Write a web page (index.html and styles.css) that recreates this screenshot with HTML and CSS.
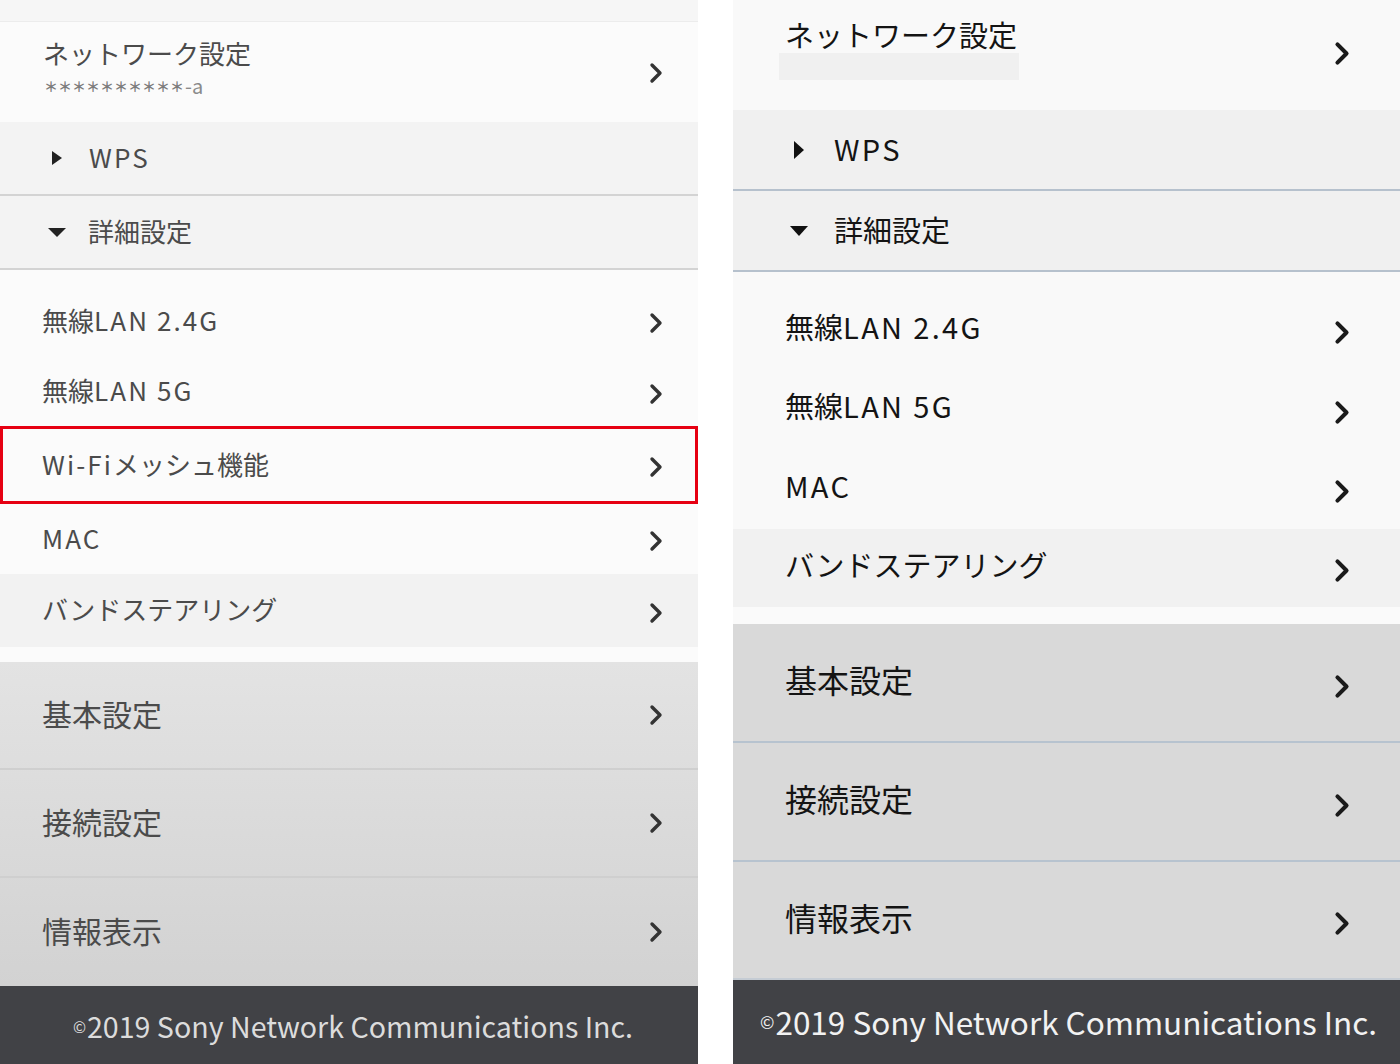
FILE: index.html
```html
<!DOCTYPE html>
<html lang="ja">
<head>
<meta charset="utf-8">
<title>設定メニュー</title>
<link rel="stylesheet" href="styles.css">
</head>
<body>
<div class="screens">
  <section class="panel left">
    <div class="strip"></div>
    <div class="row net">
      <div class="net-text">
        <div class="title">ネットワーク設定</div>
        <div class="sub"><span class="stars">＊＊＊＊＊＊＊＊＊＊</span><span class="suffix">-a</span></div>
      </div>
      <svg class="chev" viewBox="0 0 14 22"><path d="M3 3 L11 11 L3 19"/></svg>
    </div>
    <div class="row toggle">
      <span class="tri tri-right"></span><span class="label"><span class="lat">WPS</span></span>
    </div>
    <div class="row toggle">
      <span class="tri tri-down"></span><span class="label">詳細設定</span>
    </div>
    <div class="sublist">
      <div class="row item"><span class="label">無線<span class="lat">LAN 2.4G</span></span><svg class="chev" viewBox="0 0 14 22"><path d="M3 3 L11 11 L3 19"/></svg></div>
      <div class="row item i5g"><span class="label">無線<span class="lat">LAN 5G</span></span><svg class="chev" viewBox="0 0 14 22"><path d="M3 3 L11 11 L3 19"/></svg></div>
      <div class="row item mesh"><span class="label"><span class="lat">Wi-Fi</span>メッシュ機能</span><svg class="chev" viewBox="0 0 14 22"><path d="M3 3 L11 11 L3 19"/></svg></div>
      <div class="row item imac"><span class="label"><span class="lat">MAC</span></span><svg class="chev" viewBox="0 0 14 22"><path d="M3 3 L11 11 L3 19"/></svg></div>
      <div class="row item band"><span class="label">バンドステアリング</span><svg class="chev" viewBox="0 0 14 22"><path d="M3 3 L11 11 L3 19"/></svg></div>
    </div>
    <div class="gap"></div>
    <div class="mainlist">
      <div class="row main"><span class="label">基本設定</span><svg class="chev" viewBox="0 0 14 22"><path d="M3 3 L11 11 L3 19"/></svg></div>
      <div class="row main"><span class="label">接続設定</span><svg class="chev" viewBox="0 0 14 22"><path d="M3 3 L11 11 L3 19"/></svg></div>
      <div class="row main"><span class="label">情報表示</span><svg class="chev" viewBox="0 0 14 22"><path d="M3 3 L11 11 L3 19"/></svg></div>
    </div>
    <footer class="foot"><span class="copy">©</span>2019 Sony Network Communications Inc.</footer>
  </section>

  <section class="panel right">
    <div class="row net">
      <div class="net-text">
        <div class="title">ネットワーク設定</div>
        <div class="mask"></div>
      </div>
      <svg class="chev" viewBox="0 0 14 22"><path d="M3 3 L11 11 L3 19"/></svg>
    </div>
    <div class="row toggle">
      <span class="tri tri-right"></span><span class="label"><span class="lat">WPS</span></span>
    </div>
    <div class="row toggle">
      <span class="tri tri-down"></span><span class="label">詳細設定</span>
    </div>
    <div class="sublist">
      <div class="row item"><span class="label">無線<span class="lat">LAN 2.4G</span></span><svg class="chev" viewBox="0 0 14 22"><path d="M3 3 L11 11 L3 19"/></svg></div>
      <div class="row item"><span class="label">無線<span class="lat">LAN 5G</span></span><svg class="chev" viewBox="0 0 14 22"><path d="M3 3 L11 11 L3 19"/></svg></div>
      <div class="row item"><span class="label"><span class="lat">MAC</span></span><svg class="chev" viewBox="0 0 14 22"><path d="M3 3 L11 11 L3 19"/></svg></div>
      <div class="row item band"><span class="label">バンドステアリング</span><svg class="chev" viewBox="0 0 14 22"><path d="M3 3 L11 11 L3 19"/></svg></div>
    </div>
    <div class="gap"></div>
    <div class="mainlist">
      <div class="row main"><span class="label">基本設定</span><svg class="chev" viewBox="0 0 14 22"><path d="M3 3 L11 11 L3 19"/></svg></div>
      <div class="row main"><span class="label">接続設定</span><svg class="chev" viewBox="0 0 14 22"><path d="M3 3 L11 11 L3 19"/></svg></div>
      <div class="row main"><span class="label">情報表示</span><svg class="chev" viewBox="0 0 14 22"><path d="M3 3 L11 11 L3 19"/></svg></div>
    </div>
    <footer class="foot"><span class="copy">©</span>2019 Sony Network Communications Inc.</footer>
  </section>
</div>
</body>
</html>
```

FILE: styles.css
```css
* { box-sizing: border-box; }
html, body { margin: 0; padding: 0; background: #ffffff; }
body {
  width: 1400px;
  height: 1064px;
  overflow: hidden;
  font-family: "Noto Sans CJK JP", "Noto Sans", sans-serif;
}
.screens {
  display: flex;
  gap: 35px;
  height: 1064px;
}
.panel {
  display: flex;
  flex-direction: column;
  height: 1064px;
}
.left { width: 698px; color: #4b4b4b; }
.right { width: 667px; color: #141414; }

.row {
  display: flex;
  align-items: center;
}
.chev {
  margin-left: auto;
  fill: none;
  stroke: #333;
  stroke-width: 3.4;
  stroke-linecap: round;
  stroke-linejoin: round;
  flex: none;
}
.label { white-space: nowrap; }
.lat { letter-spacing: 0.08em; }

/* ---------- left panel ---------- */
.left .strip {
  height: 22px;
  background: #f6f6f6;
  border-bottom: 1px solid #ececec;
}
.left .net {
  height: 100px;
  background: #fbfbfb;
  padding: 0 35px 0 43px;
}
.left .net-text { margin-bottom: 12px; }
.left .net .title { font-size: 26px; line-height: 34px; }
.left .net .sub {
  font-size: 17px;
  line-height: 20px;
  color: #8a8a8a;
  margin-top: 6px;
  display: flex;
  align-items: center;
}
.left .net .stars {
  font-size: 14px;
  color: #7c7c7c;
  margin-left: 1px;
  font-weight: 700;
}
.left .net .suffix { font-size: 20px; line-height: 20px; color: #8a8a8a; margin-left: 1px; }
.left .chev { width: 14px; height: 22px; }
.left .net .chev { margin-top: 2px; }

.left .toggle {
  height: 74px;
  background: #f3f3f3;
  border-bottom: 2px solid #d3d3d3;
  padding-left: 50px;
  font-size: 26px;
}
.left .toggle .label { margin-bottom: 3px; }
.left .tri { flex: none; width: 0; height: 0; }
.left .tri-right {
  border-top: 7px solid transparent;
  border-bottom: 7px solid transparent;
  border-left: 10px solid #222;
  margin: 0 27px 0 2px;
}
.left .tri-down {
  border-left: 9px solid transparent;
  border-right: 9px solid transparent;
  border-top: 9px solid #222;
  margin: 0 22px 0 -2px;
}

.left .sublist {
  background: #fbfbfb;
  padding-top: 15px;
}
.left .item {
  height: 72px;
  padding: 0 35px 0 42px;
  font-size: 26px;
}
.left .item .label { margin-bottom: 4px; }
.left .item .chev { margin-top: 4px; }
.left .i5g { height: 69px; }
.left .mesh {
  height: 78px;
  border: 3px solid #e60012;
  padding: 0 32px 0 39px;
}
.left .imac { height: 70px; }
.left .band { height: 73px; background: #f2f2f2; }

.left .gap { height: 15px; background: #fbfbfb; }

.left .mainlist {
  background: linear-gradient(#e3e3e3, #d2d2d2);
}
.left .main {
  height: 108px;
  padding: 0 35px 0 42px;
  font-size: 30px;
  border-bottom: 2px solid #cfcfcf;
}
.left .main .label { margin-bottom: 4px; }
.left .main:last-child { height: 108px; border-bottom: none; }

.left .foot {
  height: 78px;
  background: #414246;
  color: #dcdcdc;
  font-size: 28.6px;
  display: flex;
  align-items: center;
  justify-content: center;
  padding-left: 8px;
}
.copy { font-size: 0.55em; margin-right: 1px; position: relative; top: 1px; }

/* ---------- right panel ---------- */
.right .net {
  height: 110px;
  background: #f9f9f9;
  padding: 0 50px 0 52px;
}
.right .net-text { margin-bottom: 14px; }
.right .net .title { font-size: 29px; line-height: 36px; }
.right .net .mask {
  width: 240px;
  height: 27px;
  margin: 1px 0 0 -6px;
  background: #f0f0f0;
}
.right .chev { width: 16px; height: 25px; stroke-width: 3.6; stroke: #1a1a1a; }
.right .net .chev { margin-bottom: 4px; }

.right .toggle {
  height: 81px;
  background: #f0f0f0;
  border-bottom: 2px solid #b6c1cd;
  padding-left: 61px;
  font-size: 29px;
}
.right .toggle .label { margin-bottom: 4px; }
.right .tri { flex: none; width: 0; height: 0; }
.right .tri-right {
  border-top: 9px solid transparent;
  border-bottom: 9px solid transparent;
  border-left: 10px solid #111;
  margin: 0 30px 0 0;
}
.right .tri-down {
  border-left: 9px solid transparent;
  border-right: 9px solid transparent;
  border-top: 10px solid #111;
  margin: 0 26px 0 -4px;
}

.right .sublist {
  background: #f9f9f9;
  padding-top: 18px;
}
.right .item {
  height: 79.5px;
  padding: 0 50px 0 52px;
  font-size: 29px;
}
.right .item .label { margin-bottom: 8px; }
.right .item .chev { margin-top: 6px; }
.right .band { height: 78px; background: #f1f1f1; }

.right .gap { height: 17px; background: #fafafa; }

.right .mainlist { background: #d9d9d9; }
.right .main {
  height: 119px;
  padding: 0 50px 0 52px;
  font-size: 32px;
  border-bottom: 2px solid #b7c3cf;
}
.right .main .label { margin-bottom: 6px; }
.right .main .chev { margin-top: 8px; }
.right .main:last-child { height: 118px; border-bottom: 2px solid #c5ccd4; }

.right .foot {
  flex: 1;
  background: #414246;
  color: #f2f2f2;
  font-size: 31.5px;
  display: flex;
  align-items: center;
  justify-content: center;
  padding-left: 4px;
  padding-bottom: 2px;
}
```
